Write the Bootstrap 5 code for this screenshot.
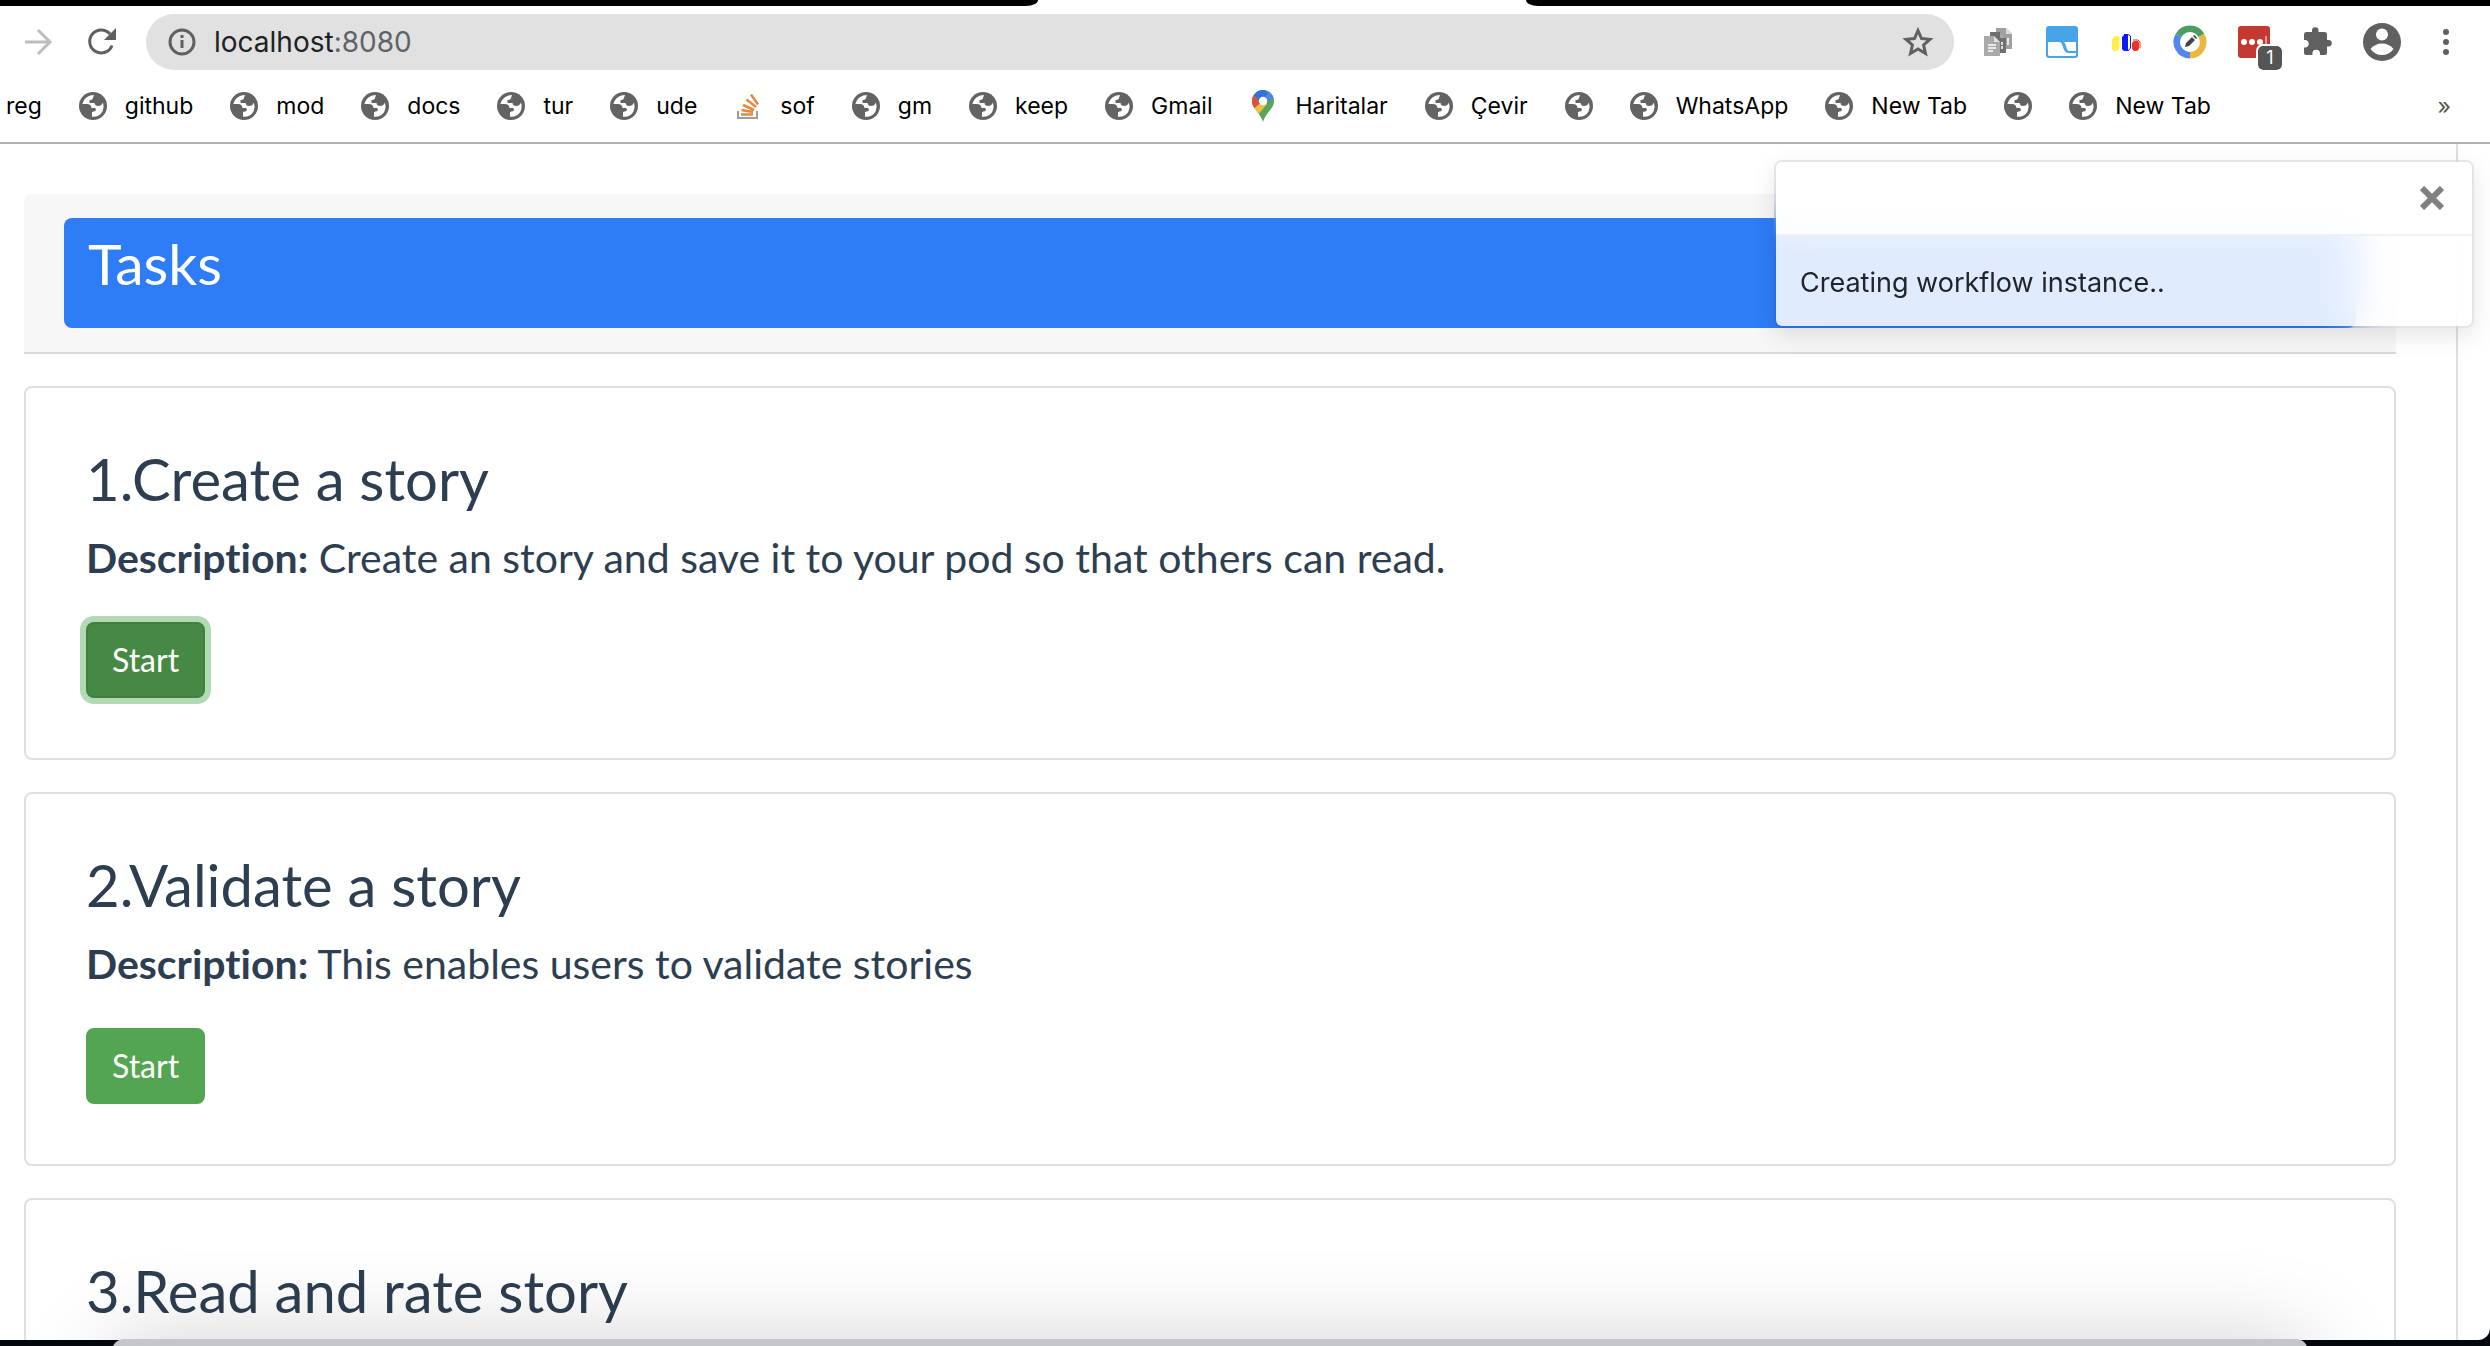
<!DOCTYPE html>
<html lang="en">
<head>
<meta charset="utf-8">
<meta name="viewport" content="width=device-width, initial-scale=1">
<title>Tasks</title>
<link href="https://cdn.jsdelivr.net/npm/bootstrap@5.3.0/dist/css/bootstrap.min.css" rel="stylesheet">
<style>
  html, body { height: 100%; }
  body { font-family: Lato, "Open Sans", sans-serif; font-variant-ligatures: none; color: #2c3e50; background: #03070d; }
  .ui-font { font-family: Inter, Roboto, sans-serif; }

  .tab-strip { height: 6px; background: #fff; }
  .tab-strip div { background: #000; }
  .tabs-left { width: 41.7%; border-bottom-right-radius: 12px 6px; }
  .tabs-right { width: 38.7%; border-bottom-left-radius: 12px 6px; }

  .browser-window { background: #fff; border-bottom-right-radius: 12px; min-height: 0; }
  .toolbar { padding: 8px 28px 0 22px; color: #5f6368; }
  .tool { width: 32px; height: 32px; padding: 0; border: 0; background: none; color: #606060; display: flex; position: relative; }
  .tool svg { overflow: visible; }
  .nav-tools { gap: 32px; margin-right: 28px; }
  .extensions { gap: 32px; margin-left: 28px; }
  .omnibox { height: 56px; border-radius: 28px; background: #e1e1e1; padding: 0 20px; }
  .omnibox svg, .bookmarks svg { flex: none; }
  .address { font-size: 28px; line-height: 36px; color: #202124; }
  .address span { color: #5f6368; }
  .count-badge { position: absolute; left: 20px; top: 20px; width: 24px; height: 24px; border-radius: 5px; background: #555; color: #fff; font-size: 18px; line-height: 24px; text-align: center; outline: 2px solid #fff; }

  .bookmarks { gap: 37px; padding: 0 39px 0 6px; height: 74px; border-bottom: 2px solid #b2b2b2; font-size: 23px; line-height: 32px; }
  .bookmarks a { display: flex; align-items: center; gap: 18px; color: #000; text-decoration: none; white-space: nowrap; }
  .more-marks { border: 0; background: none; padding: 0; color: #555; }

  .page-view { min-height: 0; overflow: hidden; }
  .page-column { margin-right: 32px; border-right: 2px solid #dfdfdf; padding: 50px 60px 0 24px; }
  .list-head { background: #f7f7f7; border-bottom: 2px solid #d9d9d9; border-radius: 8px 8px 0 0; padding: 24px 40px; margin-bottom: 32px; }
  .list-title { background: #2e7cf6; color: #fff; border-radius: 8px; padding: 12px 24px 32px; }
  .title-text { font-size: 58px; line-height: 66px; font-weight: 400; margin: 0; }
  .list-title .title-text { font-size: 57px; }
  .task { border: 2px solid #dfdfdf; border-radius: 8px; padding: 58px 60px 60px; margin-bottom: 32px; }
  .task h2 { margin-bottom: 16px; }
  .task p { font-size: 41px; line-height: 60px; margin-bottom: 34px; font-weight: 400; }
  .btn-start { --bs-btn-color: #fff; --bs-btn-bg: #53a551; --bs-btn-border-color: #53a551; --bs-btn-hover-color: #fff; --bs-btn-hover-bg: #468944; --bs-btn-hover-border-color: #41803f; border-width: 2px; border-radius: 8px; padding: 12px 24px; font-size: 32px; line-height: 48px; }
  .btn-start.pressed { background: #468944; border-color: #41803f; box-shadow: 0 0 0 6px #b2dab4; }

  .notice { position: absolute; top: 16px; right: 16px; width: 700px; border: 2px solid rgba(0,0,0,.1); border-radius: 8px; background: rgba(255,255,255,.85); background-clip: padding-box; backdrop-filter: blur(20px); box-shadow: 0 8px 24px rgba(0,0,0,.1); color: #212529; overflow: hidden; }
  .notice-head { height: 74px; padding: 0 28px; background: rgba(255,255,255,.85); border-bottom: 2px solid rgba(0,0,0,.05); }
  .notice-close { border: 0; background: none; padding: 0; display: flex; }
  .notice-body { padding: 26px 24px 22px; font-size: 27px; line-height: 42px; }

  .screen-edge { height: 6px; }
  .dock { position: absolute; left: 112px; right: 182px; top: -1px; height: 200px; background: #c5c6ca; border-radius: 12px; box-shadow: 0 0 90px rgba(0,0,0,.18); }
</style>
</head>
<body class="d-flex flex-column overflow-hidden">
<svg class="d-none">
  <symbol id="globe" viewBox="0 0 28 28">
    <circle cx="14" cy="14" r="14" fill="#636363"/>
    <path fill="#fff" d="M15 3C10 3 5 6 3.400 12L8 12Q12 12 12.500 16L16 16Q17.500 17 16.500 19L13 20L13 24.800Q20 25.500 23.500 19.500Q25.500 15 24 10.500Q22.500 14 19 14Q16 14 15.500 11L10.500 11L10.500 8Q13.500 8.500 14 6Z"/>
  </symbol>
</svg>

<div class="tab-strip d-flex justify-content-between flex-shrink-0"><div class="tabs-left"></div><div class="tabs-right"></div></div>

<div class="browser-window d-flex flex-column flex-grow-1">
  <header class="ui-font flex-shrink-0">
    <div class="toolbar d-flex align-items-center">
      <div class="nav-tools d-flex">
        <button class="tool" aria-label="Forward"><svg width="32" height="32" fill="none" stroke="#bdbdbd" stroke-width="3"><path d="M3 16H28M16 4L28 16L16 28"/></svg></button>
        <button class="tool" aria-label="Reload"><svg width="32" height="32" fill="none" stroke="#606060" stroke-width="3"><path d="M26 19.500A11.500 11.500 0 1 1 24 8"/><path d="M30 2V14H18Z" fill="#606060" stroke="none"/></svg></button>
      </div>
      <div class="omnibox d-flex align-items-center flex-grow-1">
        <svg width="32" height="32" fill="none" stroke="#606060" stroke-width="3"><circle cx="16" cy="16" r="12"/><path d="M16 14V22M16 9V12"/></svg>
        <div class="address flex-grow-1 ms-3">localhost<span>:8080</span></div>
        <button class="tool" aria-label="Bookmark this page"><svg width="32" height="32" fill="none" stroke="#606060" stroke-width="3"><path d="M16 4.500L19.500 12.500L28 13.300L21.600 19L23.500 27.500L16 23L8.500 27.500L10.400 19L4 13.300L12.500 12.500Z"/></svg></button>
      </div>
      <div class="extensions d-flex">
        <button class="tool" aria-label="Copy tabs"><svg width="32" height="32"><path fill="#a0a0a0" d="M14 2H24L30 8V23H14Z"/><path fill="#dcdcdc" d="M24 2L30 8H24Z"/><path stroke="#e8e8e8" stroke-width="2" d="M26 12V19"/><path fill="#6f6f6f" d="M8 6H18L24 12V27H8Z"/><path fill="#a8a8a8" d="M18 6L24 12H18Z"/><path stroke="#ddd" stroke-width="2" stroke-dasharray="3 1" d="M20 16V24"/><path fill="#a9a9a9" d="M2 10H12L18 16V30H2Z"/><path fill="#e0e0e0" d="M12 10L18 16H12Z"/><path stroke="#fff" stroke-width="1.500" d="M6 19H14M6 22H14M6 25H11"/></svg></button>
        <button class="tool" aria-label="Window layout"><svg width="32" height="32"><rect width="32" height="32" rx="3" fill="#48a4e8"/><path fill="#fff" d="M2 16H14Q16 17 17 21Q18 26 22 27H30V28.500Q30 30 28.500 30H3.500Q2 30 2 28.500ZM18 16H30V25H23Q21 25 20 20Q19.500 17.500 18 16Z"/></svg></button>
        <button class="tool" aria-label="Charts"><svg width="32" height="32"><path fill="#fff04a" d="M2 13L4 11H9V23L7 25H4L2 23Z"/><path fill="none" stroke="#f5e98a" d="M4 10.500H8L10 12V22"/><path fill="#0a1cf5" d="M12 11L14 9H18V25H14L12 23Z"/><path fill="none" stroke="#0a1cf5" d="M14 8.500H18L20.500 10V22L18 25"/><path fill="#ea3323" d="M22 17L24 15H28L29 17V23L27 25H24L22 23Z"/><path fill="none" stroke="#ea3323" d="M23 14H28L30 16V22"/></svg></button>
        <button class="tool" aria-label="Editor"><svg width="32" height="32"><g fill="none" stroke-width="7"><path stroke="#489f5e" d="M4.740 9.500A13 13 0 0 1 27.260 9.500"/><path stroke="#edb63e" d="M27.260 9.500A13 13 0 0 1 16 29"/><path stroke="#5186ec" d="M16 29A13 13 0 0 1 4.740 9.500"/></g><circle cx="16" cy="16" r="10" fill="#fff"/><path fill="#444" d="M11 21L12 17L18 11L21 14L15 20ZM19 10L20 9Q21 9 23 12L22 13Z"/></svg></button>
        <button class="tool" aria-label="Passwords"><svg width="32" height="32"><rect width="32" height="32" rx="3" fill="#c43a31"/><g fill="#fff"><circle cx="6" cy="16" r="3"/><circle cx="14" cy="16" r="3"/><circle cx="22" cy="16" r="3"/><path d="M27.500 10H28.500V21H27.500Z"/></g></svg><span class="count-badge">1</span></button>
        <button class="tool" aria-label="Extensions"><svg width="32" height="32"><path fill="#606060" d="M2 8.500Q2 6 4 6H10V4.500A3 3 0 0 1 16.500 4.500V6H22.500Q25 6 25 8.500V14H26.500A3 3 0 0 1 26.500 20.500H25V27Q25 29 23 29H18V27.500A3.800 3.800 0 0 0 10.400 27.500V29H4Q2 29 2 27V21.500H3.500A3.800 3.800 0 0 0 3.500 14H2Z"/></svg></button>
        <button class="tool" aria-label="Profile"><svg width="32" height="32"><circle cx="16" cy="16" r="19" fill="#606060"/><circle cx="16" cy="8.500" r="6" fill="#fff"/><path fill="#fff" d="M4.500 23Q9 17.500 16 17.500Q23 17.500 27.500 23Q23 29 16 29Q9 29 4.500 23Z"/></svg></button>
        <button class="tool" aria-label="Menu"><svg width="32" height="32" fill="#606060"><circle cx="16" cy="6" r="3"/><circle cx="16" cy="16" r="3"/><circle cx="16" cy="26" r="3"/></svg></button>
      </div>
    </div>
    <nav class="bookmarks d-flex align-items-center" aria-label="Bookmarks">
      <a href="#">reg</a>
      <a href="#"><svg width="28" height="28"><use href="#globe"/></svg>github</a>
      <a href="#"><svg width="28" height="28"><use href="#globe"/></svg>mod</a>
      <a href="#"><svg width="28" height="28"><use href="#globe"/></svg>docs</a>
      <a href="#"><svg width="28" height="28"><use href="#globe"/></svg>tur</a>
      <a href="#"><svg width="28" height="28"><use href="#globe"/></svg>ude</a>
      <a href="#"><svg width="28" height="28" fill="none"><path stroke="#9b9fa3" stroke-width="2" d="M4 19V26H23V19"/><path stroke="#e8883f" stroke-width="2.500" d="M7 22.500H19M7.500 18L19 20M9 13L20 18M12.500 7.500L22 15M17 2.500L24 12.500"/></svg>sof</a>
      <a href="#"><svg width="28" height="28"><use href="#globe"/></svg>gm</a>
      <a href="#"><svg width="28" height="28"><use href="#globe"/></svg>keep</a>
      <a href="#"><svg width="28" height="28"><use href="#globe"/></svg>Gmail</a>
      <a href="#"><svg width="28" height="32" viewBox="0 0 28 32"><defs><clipPath id="pin"><path d="M14 0A11 11 0 0 1 25 11C25 19 17 22 14 32C11 22 3 19 3 11A11 11 0 0 1 14 0Z"/></clipPath></defs><g clip-path="url(#pin)"><path fill="#58a55c" d="M0 0H28V32H0Z"/><path fill="#f1bf42" d="M0 20L14 7L18 14L8 26Z"/><path fill="#d95140" d="M0 0L14 11L3 20Z"/><path fill="#3571d8" d="M4 4L14 -3L20 4L12 13Z"/><path fill="#5186ec" d="M13 11L23 -2L28 8L17 11Z"/></g><circle cx="14" cy="11" r="4.200" fill="#fff"/></svg>Haritalar</a>
      <a href="#"><svg width="28" height="28"><use href="#globe"/></svg>Çevir</a>
      <a href="#" aria-label="Untitled bookmark"><svg width="28" height="28"><use href="#globe"/></svg></a>
      <a href="#"><svg width="28" height="28"><use href="#globe"/></svg>WhatsApp</a>
      <a href="#"><svg width="28" height="28"><use href="#globe"/></svg>New Tab</a>
      <a href="#" aria-label="Untitled bookmark"><svg width="28" height="28"><use href="#globe"/></svg></a>
      <a href="#"><svg width="28" height="28"><use href="#globe"/></svg>New Tab</a>
      <button class="more-marks ms-auto" aria-label="More bookmarks">»</button>
    </nav>
  </header>

  <div class="page-view position-relative flex-grow-1">
    <main class="page-column">
      <div class="list-head"><div class="list-title"><h1 class="title-text">Tasks</h1></div></div>
      <section class="task">
        <h2 class="title-text">1.Create a story</h2>
        <p><strong>Description:</strong> Create an story and save it to your pod so that others can read.</p>
        <button class="btn btn-start pressed">Start</button>
      </section>
      <section class="task">
        <h2 class="title-text">2.Validate a story</h2>
        <p><strong>Description:</strong> This enables users to validate stories</p>
        <button class="btn btn-start">Start</button>
      </section>
      <section class="task">
        <h2 class="title-text">3.Read and rate story</h2>
      </section>
    </main>
    <div class="notice ui-font" role="status">
      <div class="notice-head d-flex align-items-center justify-content-end">
        <button class="notice-close" aria-label="Close"><svg width="24" height="24" stroke="#808080" stroke-width="6"><path d="M2 2L22 22M22 2L2 22"/></svg></button>
      </div>
      <div class="notice-body">Creating workflow instance..</div>
    </div>
  </div>
</div>
<div class="screen-edge position-relative flex-shrink-0"><div class="dock"></div></div>
<script src="https://cdn.jsdelivr.net/npm/bootstrap@5.3.0/dist/js/bootstrap.bundle.min.js"></script>
</body>
</html>
